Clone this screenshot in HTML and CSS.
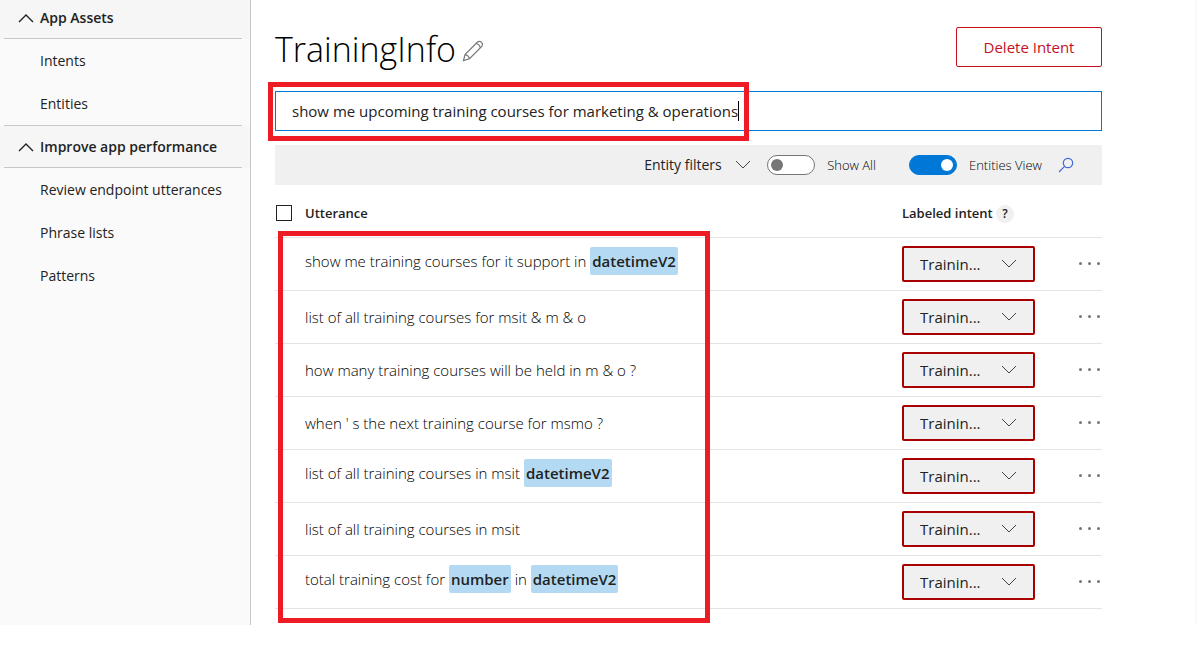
FILE: index.html
```html
<!DOCTYPE html>
<html lang="en">
<head>
<meta charset="utf-8">
<meta name="viewport" content="width=device-width, initial-scale=1">
<title>TrainingInfo</title>
<link rel="stylesheet" href="styles.css">
</head>
<body>
<svg class="defs" aria-hidden="true">
  <symbol id="down" viewBox="0 0 16 10"><path d="M1 1l7 7 7-7"/></symbol>
  <symbol id="up" viewBox="0 0 16 10"><path d="M1 9l7-7 7 7"/></symbol>
</svg>
<div class="app">
  <nav class="sidebar">
    <button class="group"><span class="group-label"><svg class="icon up"><use href="#up"/></svg>App Assets</span></button>
    <ul class="links ruled">
      <li><a href="#intents">Intents</a></li>
      <li><a href="#entities">Entities</a></li>
    </ul>
    <button class="group"><span class="group-label"><svg class="icon up"><use href="#up"/></svg>Improve app performance</span></button>
    <ul class="links">
      <li><a href="#review">Review endpoint utterances</a></li>
      <li><a href="#phrases">Phrase lists</a></li>
      <li><a href="#patterns">Patterns</a></li>
    </ul>
  </nav>
  <main class="main">
    <header class="heading">
      <h1>TrainingInfo</h1>
      <button class="edit" aria-label="Rename intent"><svg class="pencil" viewBox="0 0 22 22"><path d="M1.500 20.500L3 14.500 15.500 2q2.200-1.500 4 .300 1.800 1.800.300 4L7.500 18.700zM3 14.500q3.500.700 4.500 4.200M14 3.500q3.500.700 4.300 4.300"/></svg></button>
      <button class="delete">Delete Intent</button>
    </header>
    <div class="query">
      <div class="query-text">
        <input type="text" aria-label="Example utterance" value="show me upcoming training courses for marketing &amp; operations">
        <span class="caret"></span>
        <span class="mark mark-query"></span>
      </div>
    </div>
    <div class="toolbar">
      <span class="picker filters"><select aria-label="Entity filters"><option>Entity filters</option></select><svg class="icon down"><use href="#down"/></svg></span>
      <label class="switch show-all"><input type="checkbox" role="switch">Show All</label>
      <label class="switch entities-view"><input type="checkbox" role="switch" checked>Entities View</label>
      <button class="search" aria-label="Search"><svg class="lens" viewBox="0 0 16 16"><circle cx="10" cy="6" r="4.700"/><path d="M6.600 9.400L1 15"/></svg></button>
    </div>
    <div class="list">
      <table>
        <thead>
          <tr>
            <th class="pick"><input type="checkbox" aria-label="Select all"></th>
            <th>Utterance</th>
            <th class="intent">Labeled intent <button class="help" aria-label="Help">?</button></th>
            <th class="more"></th>
          </tr>
        </thead>
        <tbody>
          <tr class="tagged"><td></td><td class="utterance">show me training courses for it support in <mark>datetimeV2</mark></td><td><span class="picker boxed"><select aria-label="Intent"><option>Trainin...</option></select><svg class="icon down"><use href="#down"/></svg></span></td><td class="more"><button aria-label="More"><i></i><i></i><i></i></button></td></tr>
          <tr><td></td><td class="utterance">list of all training courses for msit &amp; m &amp; o</td><td><span class="picker boxed"><select aria-label="Intent"><option>Trainin...</option></select><svg class="icon down"><use href="#down"/></svg></span></td><td class="more"><button aria-label="More"><i></i><i></i><i></i></button></td></tr>
          <tr><td></td><td class="utterance">how many training courses will be held in m &amp; o ?</td><td><span class="picker boxed"><select aria-label="Intent"><option>Trainin...</option></select><svg class="icon down"><use href="#down"/></svg></span></td><td class="more"><button aria-label="More"><i></i><i></i><i></i></button></td></tr>
          <tr><td></td><td class="utterance">when ' s the next training course for msmo ?</td><td><span class="picker boxed"><select aria-label="Intent"><option>Trainin...</option></select><svg class="icon down"><use href="#down"/></svg></span></td><td class="more"><button aria-label="More"><i></i><i></i><i></i></button></td></tr>
          <tr class="tagged"><td></td><td class="utterance">list of all training courses in msit <mark>datetimeV2</mark></td><td><span class="picker boxed"><select aria-label="Intent"><option>Trainin...</option></select><svg class="icon down"><use href="#down"/></svg></span></td><td class="more"><button aria-label="More"><i></i><i></i><i></i></button></td></tr>
          <tr><td></td><td class="utterance">list of all training courses in msit</td><td><span class="picker boxed"><select aria-label="Intent"><option>Trainin...</option></select><svg class="icon down"><use href="#down"/></svg></span></td><td class="more"><button aria-label="More"><i></i><i></i><i></i></button></td></tr>
          <tr class="tagged"><td></td><td class="utterance">total training cost for <mark>number</mark> in <mark>datetimeV2</mark></td><td><span class="picker boxed"><select aria-label="Intent"><option>Trainin...</option></select><svg class="icon down"><use href="#down"/></svg></span></td><td class="more"><button aria-label="More"><i></i><i></i><i></i></button></td></tr>
        </tbody>
      </table>
      <span class="mark mark-list"></span>
    </div>
  </main>
</div>
</body>
</html>
```

FILE: styles.css
```css
* { box-sizing: border-box; }
body {
  margin: 0;
  background: #fff;
  color: #222;
  font: 14px/20px "Open Sans", "Noto Sans", sans-serif;
}
button, input, select { font: inherit; color: inherit; margin: 0; }
button { padding: 0; border: 0; background: none; }
.defs { position: absolute; width: 0; height: 0; }
.icon { width: 16px; height: 10px; fill: none; stroke: #444; stroke-width: 1; flex: none; }
.app { display: flex; border-right: 2px solid #fafafa; }

/* Sidebar */
.sidebar {
  flex: none;
  width: 251px;
  margin-top: -3px;
  border-right: 1px solid #c8c8c8;
  background: #fafafa;
}
.group {
  display: block;
  width: 100%;
  padding: 0 8px 0 4px;
  background: #f6f6f6;
  text-align: left;
  font-weight: 600;
}
.group-label {
  display: flex;
  align-items: center;
  gap: 6px;
  height: 42px;
  padding-left: 14px;
  border-bottom: 1px solid #c8c8c8;
}
.icon.up { stroke: #222; stroke-width: 1.400; }
.links { list-style: none; margin: 0 8px 0 4px; padding: 0; }
.links.ruled { border-bottom: 1px solid #c8c8c8; }
.links a {
  display: flex;
  align-items: center;
  height: 43px;
  padding-left: 36px;
  color: inherit;
  text-decoration: none;
}

/* Intent heading and query */
.main { flex: 1; min-width: 0; padding: 27px 93px 16px 24px; }
.heading { display: flex; align-items: center; height: 40px; margin-bottom: 24px; }
h1 { margin: 0; padding-top: 4px; color: #000; font-size: 34px; line-height: 40px; font-weight: 300; }
.edit { margin-left: 6px; padding-top: 8px; }
.pencil { display: block; width: 22px; height: 22px; fill: none; stroke: #777; stroke-width: 1.200; }
.delete {
  width: 146px;
  height: 40px;
  margin-left: auto;
  border: 1px solid #c50f1f;
  border-radius: 2px;
  color: #c50f1f;
  font-size: 15px;
}
.query { display: flex; height: 40px; padding-left: 16px; border: 1px solid #0078d7; }
.query-text { position: relative; display: flex; align-items: center; }
.query-text input {
  field-sizing: content;
  padding: 0;
  border: 0;
  outline: 0;
  background: none;
  font-size: 15px;
}
.caret { width: 1px; height: 20px; background: #000; }
.mark { position: absolute; border: 5px solid #ed1c24; pointer-events: none; }
.mark-query { inset: -10px -10px -11px -24px; }

/* Toolbar */
.toolbar {
  display: flex;
  align-items: center;
  justify-content: flex-end;
  height: 40px;
  margin-top: 14px;
  padding-right: 28px;
  background: #f0f0f0;
}
.picker { position: relative; display: flex; align-items: center; }
.picker select { appearance: none; border: 0; outline: 0; background: none; padding: 0; }
.picker .icon { position: absolute; right: 0; pointer-events: none; }
.filters { margin-right: 16px; }
.filters select { width: 107px; }
.switch { display: flex; align-items: center; gap: 12px; color: #000; font-size: 13px; font-weight: 300; }
.show-all { margin-right: 33px; }
.entities-view { margin-right: 16px; }
.switch input {
  appearance: none;
  display: flex;
  align-items: center;
  width: 48px;
  height: 20px;
  padding: 0 3px;
  border: 1px solid #767676;
  border-radius: 10px;
  background: #fff;
}
.switch input::before { content: ""; width: 12px; height: 12px; border-radius: 50%; background: #767676; }
.switch input:checked { justify-content: flex-end; border-color: #0078d7; background: #0078d7; }
.switch input:checked::before { background: #fff; }
.lens { display: block; width: 16px; height: 16px; fill: none; stroke: #4668d8; stroke-width: 1.200; }

/* Utterances */
.list { position: relative; }
table { width: 100%; border-collapse: collapse; table-layout: fixed; }
th, td { padding: 0; text-align: left; border-bottom: 1px solid #e4e4e4; }
th { height: 52px; padding-top: 4px; font-size: 13px; font-weight: 600; }
td { height: 53px; }
.pick { width: 30px; }
.intent { width: 160px; }
th.more { width: 40px; }
.pick input {
  appearance: none;
  display: block;
  width: 16px;
  height: 16px;
  margin-left: 1px;
  border: 1px solid #222;
}
.help { width: 18px; height: 18px; border-radius: 50%; background: #f0f0f0; font-size: 12px; line-height: 18px; font-weight: 600; }
.utterance { color: #000; font-size: 15px; font-weight: 300; }
.tagged .utterance { padding-bottom: 6px; }
mark {
  display: inline-block;
  padding: 4px 2px;
  border-radius: 2px;
  background: #b3daf2;
  color: #222;
  font-weight: 600;
}
.boxed { width: 133px; }
.boxed select {
  width: 100%;
  height: 36px;
  padding-left: 16px;
  border: 2px solid #a80000;
  border-radius: 2px;
  background: #f0f0f0;
  font-size: 15px;
}
.boxed .icon { right: 18px; }
td.more button { display: flex; gap: 6px; margin-left: auto; padding-right: 2px; }
td.more i { width: 3px; height: 3px; border-radius: 50%; background: #767676; }
.mark-list { left: 3px; top: 46px; bottom: -14px; width: 432px; }
```
